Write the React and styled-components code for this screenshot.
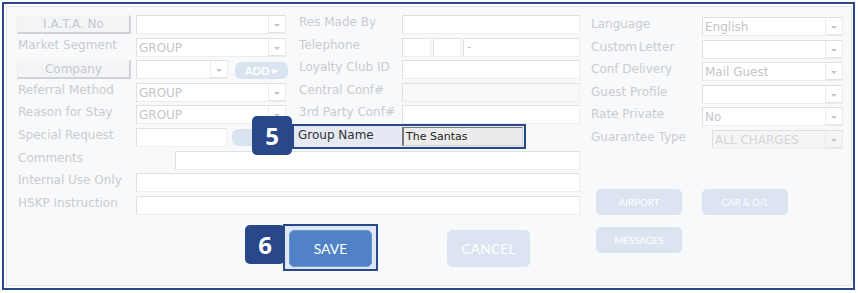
import React from "react";
import styled, { createGlobalStyle } from "styled-components";

const NAVY = "#29488a";

const Global = createGlobalStyle`
  html, body { margin: 0; padding: 0; background: #fff; }
  body { font-family: "DejaVu Sans", Verdana, sans-serif; }
`;

const Frame = styled.div`
  box-sizing: border-box;
  margin: 2px;
  width: 853px;
  height: 288px;
  border: 2px solid ${NAVY};
  padding: 2px 1px 2px 2px;
  background: #fff;
`;

const Panel = styled.div`
  box-sizing: border-box;
  width: 846px;
  height: 280px;
  border: 1px solid #e3e5e9;
  background: #f8f9fb;
  padding: 8px 0 0 10px;
`;

const Form = styled.div`
  display: grid;
  grid-template-columns: 119px 162px 104px 188px 112px 140px;
  grid-template-rows: repeat(9, 20px) auto;
  row-gap: 2.6px;
  align-items: start;
`;

const Label = styled.div`
  font-size: 12px;
  line-height: ${(p) => (p.$right ? "18px" : "14px")};
  color: #c9cccf;
  white-space: nowrap;
  word-spacing: ${(p) => (p.$tight ? "-2px" : "0")};
  padding-left: 1px;
`;

const ButtonLabel = styled.div`
  box-sizing: border-box;
  width: 114px;
  height: 19px;
  background: #f3f4f6;
  border-top: 1px solid #f6f6f7;
  border-left: 1px solid #ededee;
  border-right: 2px solid #d0d2d5;
  border-bottom: 2px solid #d0d2d5;
  color: #c5c8cc;
  font-size: 12px;
  display: flex;
  align-items: center;
  justify-content: center;
`;

const SelectBox = styled.div`
  box-sizing: border-box;
  display: flex;
  width: ${(p) => p.$w}px;
  height: 19px;
  margin-left: ${(p) => p.$ml || 0}px;
  margin-top: ${(p) => p.$mt || 0}px;
  background: ${(p) => (p.$disabled ? "#f5f5f6" : "#fff")};
  border-top: 1px solid #dedfe0;
  border-left: 1px solid #dedfe0;
  border-right: 1px solid #ececec;
  border-bottom: 1px solid #ececec;
`;

const SelectValue = styled.div`
  flex: 1;
  font-size: 12px;
  line-height: 18px;
  padding-left: 2px;
  color: ${(p) => (p.$disabled ? "#d4d6d8" : "#c3c5c8")};
  overflow: hidden;
  white-space: nowrap;
`;

const Arrow = styled.div`
  position: relative;
  width: 16px;
  border-left: 1px solid #ececec;
  border-bottom: 1px solid #e4e4e4;
  &::after {
    content: "";
    position: absolute;
    left: 5px;
    top: 8px;
    border-left: 3px solid transparent;
    border-right: 3px solid transparent;
    border-top: 3px solid #c2c4c6;
  }
`;

const Select = ({ w, value, disabled, ml, mt }) => (
  <SelectBox $w={w} $disabled={disabled} $ml={ml} $mt={mt}>
    <SelectValue $disabled={disabled}>{value}</SelectValue>
    <Arrow />
  </SelectBox>
);

const Input = styled.div`
  box-sizing: border-box;
  width: ${(p) => p.$w}px;
  height: 19px;
  margin-left: ${(p) => p.$ml || 0}px;
  background: ${(p) => (p.$gray ? "#f9f9fa" : "#fff")};
  border-top: 1px solid #dfe0e1;
  border-left: 1px solid #dfe0e1;
  border-right: 1px solid #eeeeee;
  border-bottom: 1px solid #eeeeee;
  font-size: 12px;
  line-height: 17px;
  padding-left: 3px;
  color: #c3c5c8;
`;

const Wide = styled.div`
  grid-column: 2 / span 3;
`;

const Row = styled.div`
  display: flex;
  align-items: center;
  gap: ${(p) => p.$gap || 0}px;
`;

const PillButton = styled.div`
  box-sizing: border-box;
  width: 53px;
  height: 17px;
  margin-top: 1px;
  border-radius: 6px;
  background: #dae4f1;
  color: #fff;
  font: 700 11px "Lato", "DejaVu Sans", sans-serif;
  display: flex;
  align-items: center;
  justify-content: center;
  gap: 3px;
`;

const GroupBox = styled.div`
  position: relative;
  grid-column: 3 / span 2;
  box-sizing: border-box;
  width: 234px;
  height: 25px;
  margin-left: -6px;
  margin-top: -4px;
  border: 2px solid ${NAVY};
  background: #e4e9f3;
  display: flex;
  align-items: center;
  padding-left: 4px;
`;

const GroupLabel = styled.div`
  width: 104px;
  font-size: 12px;
  color: #333;
  margin-top: -3px;
`;

const GroupInput = styled.div`
  box-sizing: border-box;
  width: 121px;
  height: 19px;
  background: #ebebeb;
  border-top: 1px solid #7b7b7b;
  border-left: 2px solid #787878;
  border-right: 1px solid #d4d4d4;
  border-bottom: 1px solid #d4d4d4;
  font-size: 11px;
  line-height: 18px;
  padding-left: 2px;
  color: #222;
`;

const Badge = styled.div`
  position: absolute;
  left: ${(p) => p.$l}px;
  top: ${(p) => p.$t}px;
  width: 40px;
  height: 39px;
  border-radius: 5px;
  background: ${NAVY};
  color: #fff;
  font: 700 24px "Open Sans", "DejaVu Sans", sans-serif;
  display: flex;
  align-items: center;
  justify-content: center;
`;

const SideButtons = styled.div`
  grid-column: 5 / span 2;
  grid-row: 7 / span 4;
  display: grid;
  grid-template-columns: 86px 86px;
  column-gap: 20px;
  row-gap: 12px;
  padding: 38px 0 0 6px;
  align-content: start;
`;

const SoftButton = styled.div`
  box-sizing: border-box;
  width: ${(p) => p.$w || 86}px;
  height: ${(p) => p.$h || 26}px;
  border-radius: 5px;
  background: ${(p) => (p.$primary ? "#5181c6" : "#dbe4f0")};
  border: 1px solid ${(p) => (p.$primary ? "#6b95d0" : "#dbe4f0")};
  color: #fff;
  font: 400 ${(p) => p.$fs || 10}px "Lato", "DejaVu Sans", sans-serif;
  letter-spacing: ${(p) => (p.$fs ? "0" : "-0.2px")};
  display: flex;
  align-items: center;
  justify-content: center;
  margin-left: ${(p) => p.$ml || 0}px;
  margin-top: ${(p) => p.$mt || 0}px;
`;

const SaveRow = styled.div`
  grid-column: 1 / span 4;
  display: flex;
  align-items: flex-start;
  margin-top: 5.6px;
  padding-left: 266px;
`;

const SaveHighlight = styled.div`
  position: relative;
  box-sizing: border-box;
  width: 95px;
  height: 47px;
  border: 2px solid ${NAVY};
  background: #dfe7f3;
  padding: 4px 0 0 4px;
`;

export default function App() {
  return (
    <>
      <Global />
      <Frame>
        <Panel>
          <Form>
            {/* row 1 */}
            <ButtonLabel>I.A.T.A. No</ButtonLabel>
            <Select w={150} value="" />
            <Label>Res Made By</Label>
            <Input $w={178} />
            <Label $right>Language</Label>
            <Select w={141} value="English" mt={2} />

            {/* row 2 */}
            <Label>Market Segment</Label>
            <Select w={150} value="GROUP" />
            <Label>Telephone</Label>
            <Row $gap={2}>
              <Input $w={29} />
              <Input $w={28} />
              <Input $w={117}>-</Input>
            </Row>
            <Label $right $tight>Custom Letter</Label>
            <Select w={141} value="" mt={2} />

            {/* row 3 */}
            <ButtonLabel>Company</ButtonLabel>
            <Row $gap={7}>
              <Select w={92} value="" />
              <PillButton>
                ADD<span>▸</span>
              </PillButton>
            </Row>
            <Label>Loyalty Club ID</Label>
            <Input $w={178} />
            <Label $right>Conf Delivery</Label>
            <Select w={141} value="Mail Guest" mt={2} />

            {/* row 4 */}
            <Label>Referral Method</Label>
            <Select w={150} value="GROUP" />
            <Label>Central Conf#</Label>
            <Input $w={178} $gray />
            <Label $right>Guest Profile</Label>
            <Select w={141} value="" mt={2} />

            {/* row 5 */}
            <Label>Reason for Stay</Label>
            <Select w={150} value="GROUP" />
            <Label>3rd Party Conf#</Label>
            <Input $w={178} />
            <Label $right>Rate Private</Label>
            <Select w={141} value="No" mt={2} />

            {/* row 6 */}
            <Label>Special Request</Label>
            <Row $gap={5}>
              <Input $w={91} />
              <PillButton />
            </Row>
            <GroupBox>
              <Badge $l={-42} $t={-10}>5</Badge>
              <GroupLabel>Group Name</GroupLabel>
              <GroupInput>The Santas</GroupInput>
            </GroupBox>
            <Label $right>Guarantee Type</Label>
            <Select w={131} value="ALL CHARGES" disabled ml={10} mt={2} />

            {/* row 7 */}
            <Label>Comments</Label>
            <Wide>
              <Input $w={405} $ml={39} />
            </Wide>
            <SideButtons>
              <SoftButton>AIRPORT</SoftButton>
              <SoftButton>CAR &amp; D/L</SoftButton>
              <SoftButton>MESSAGES</SoftButton>
            </SideButtons>

            {/* row 8 */}
            <Label>Internal Use Only</Label>
            <Wide>
              <Input $w={444} />
            </Wide>

            {/* row 9 */}
            <Label>HSKP Instruction</Label>
            <Wide>
              <Input $w={444} />
            </Wide>

            {/* save row */}
            <SaveRow>
              <SaveHighlight>
                <Badge $l={-40} $t={-1}>6</Badge>
                <SoftButton $primary $w={83} $h={37} $fs={14}>SAVE</SoftButton>
              </SaveHighlight>
              <SoftButton $w={83} $h={37} $fs={14} $ml={69} $mt={6}>
                CANCEL
              </SoftButton>
            </SaveRow>
          </Form>
        </Panel>
      </Frame>
    </>
  );
}
